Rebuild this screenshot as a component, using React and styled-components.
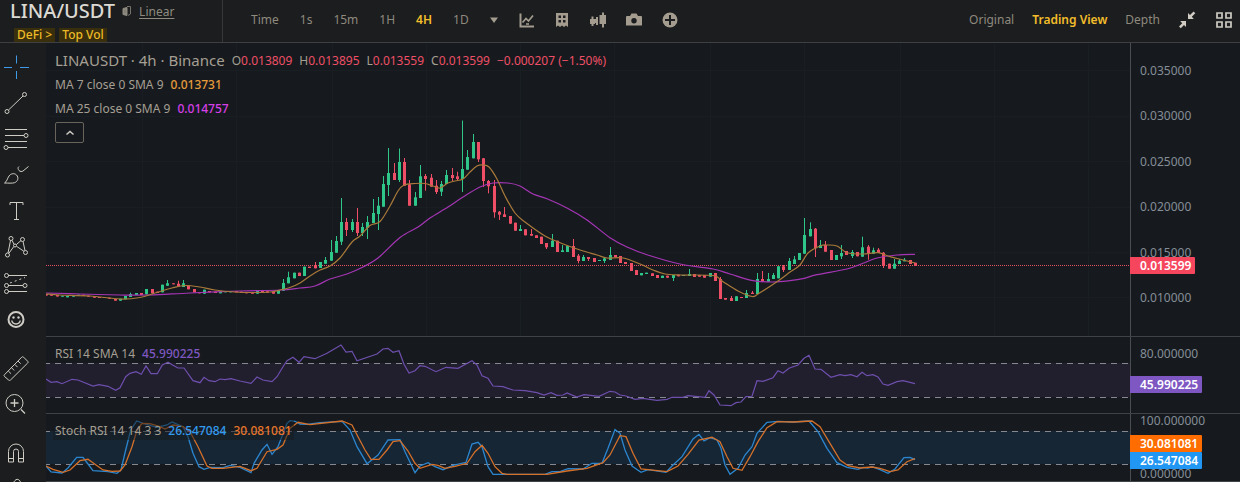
import React, { useState } from "react";
import styled, { createGlobalStyle } from "styled-components";

const INTERVALS = ["Time", "1s", "15m", "1H", "4H", "1D"];
const VIEWS = ["Original", "Trading View", "Depth"];
const PRICES = ["0.035000", "0.030000", "0.025000", "0.020000", "0.015000", "0.010000"];

const GREEN = "#2fc68a";
const RED = "#ee4f66";

// Canvas origin of each pane, all series below share one coordinate space
const LEFT = 46;
const MAIN_TOP = 43;
const RSI_TOP = 337;
const STOCH_TOP = 414;
const STEP = 5.265;

// [up, top, bottom, high, low]
const CANDLES = [
  [0, 294, 295.5], [0, 294.3, 295.7], [0, 295, 296.5], [1, 295.7, 296.7], [1, 296, 297.3],
  [1, 295.3, 296.7], [1, 294.7, 295.7], [0, 294.7, 295.7], [0, 295.7, 296.7], [0, 296.3, 297.7],
  [0, 297, 298], [0, 297, 298], [0, 297.7, 298.7], [0, 299, 300.7], [1, 298.7, 300.7],
  [1, 296, 299.3], [1, 294, 297, 292.7], [1, 293, 295], [0, 293, 295], [1, 289, 294.3],
  [0, 289, 293.3], [0, 291.7, 293], [1, 284.7, 292.3], [1, 283.3, 285.7, 280], [0, 283.3, 284.3],
  [0, 283.7, 286.7, 280.7], [1, 283.3, 287, 280], [0, 285.3, 289.3], [0, 289, 292.3], [0, 292, 293.3],
  [1, 289.7, 293.7], [0, 291, 292.3], [0, 291.7, 293], [1, 291.3, 293.3], [1, 291, 292.3],
  [1, 291, 292.3], [0, 291, 292.3], [0, 291.7, 293], [0, 292, 293.3], [0, 292.3, 293.7],
  [1, 290, 293.7], [0, 290, 292], [0, 291.3, 292.7], [0, 291.7, 293.7], [1, 290, 293.7],
  [1, 283, 290.7, 279], [1, 277.3, 283.3, 271.7], [1, 272.7, 278.3], [0, 272.7, 276], [1, 266.7, 276],
  [0, 266.7, 268], [0, 266, 268.3, 262], [1, 262, 268], [1, 260, 263.7, 257], [1, 252, 260.7, 240],
  [1, 241, 252.7, 236], [1, 222, 241.7, 198, 245], [0, 222, 230, 218, 236], [1, 222, 230, 219, 232], [0, 222, 233, 208, 236],
  [1, 227, 233, 223, 236], [1, 222, 228, 216, 239], [1, 213, 223, 199], [1, 205.7, 214, 197, 230], [1, 184, 206.7, 176],
  [1, 173, 185, 148, 196], [0, 173, 180, 163], [1, 162, 180, 148.5, 182], [0, 162, 185.7, 158], [0, 184.3, 205.7, 180],
  [1, 197.3, 205.7, 192], [1, 176.3, 198, 165], [0, 176, 179, 174, 190.7], [0, 177.7, 186.7, 174], [0, 185.7, 192, 180, 194],
  [1, 184, 191.7, 181, 196], [1, 175, 184, 170], [0, 175, 178, 168, 181], [0, 176.3, 179, 171.7, 180], [1, 169, 179, 120.5, 192],
  [1, 157, 169.7, 150], [1, 142, 158.3, 134], [0, 142, 159.3, 142, 162], [0, 158.3, 181, 158, 187], [0, 181, 186.3, 180, 193.3],
  [0, 186, 212.3, 180, 217.7], [0, 211.7, 214.7, 211, 220], [0, 214.3, 217, 207], [0, 216, 223.7], [0, 222.7, 230.7],
  [1, 229, 231, 225], [0, 229.3, 235.3], [0, 234, 235.7, 229], [0, 235.3, 238], [0, 236.7, 244],
  [0, 243, 247.3, 243, 249], [1, 240.7, 247, 234], [0, 240.7, 252], [1, 250.3, 252, 245], [1, 246, 252],
  [0, 246, 257, 239], [0, 255.7, 261, 254, 263.3], [1, 257, 261, 255], [0, 257, 259, 257, 261], [0, 258, 262],
  [1, 260, 261], [1, 258.3, 261, 257, 263], [1, 255, 260, 247], [0, 255, 257.3], [0, 256, 263],
  [0, 262, 264], [0, 263, 271], [0, 270, 275], [1, 273, 275.3], [1, 272.7, 274],
  [0, 273.3, 276], [0, 275, 278], [1, 275.7, 278], [0, 275.7, 277.7], [1, 275, 278, 275, 281],
  [0, 274.7, 276.3], [1, 275, 276], [1, 274, 276, 269], [0, 274, 277], [0, 275, 276.7],
  [0, 275, 277.7], [1, 273, 276.7], [0, 273, 281], [0, 279, 299, 277], [0, 298, 299.7],
  [0, 298, 301, 296], [1, 296.3, 301], [0, 297, 298], [1, 293, 298, 290], [0, 292.7, 294, 291],
  [1, 279, 294, 273], [0, 279, 281.7, 271], [1, 279, 281.7, 273], [1, 275, 279, 273], [1, 266.3, 278.3],
  [0, 266.3, 270, 265, 272], [1, 261, 270, 258], [1, 259.3, 264, 256], [1, 253, 260], [1, 235, 253.7, 218],
  [1, 229, 236.3, 222.3], [0, 228.7, 248.3, 228, 257], [1, 245, 248, 240], [0, 245, 251.7, 241], [0, 250, 260],
  [1, 255, 260], [1, 253, 256.3, 245, 259], [0, 251, 255], [1, 252, 256, 250, 258], [0, 252, 256.3],
  [1, 247.3, 256.7, 236.7], [0, 246.7, 253.7, 245, 259.7], [1, 250.3, 253.7, 247.7], [0, 249.7, 253, 248], [0, 252.7, 265, 252, 268],
  [0, 263.7, 268.7], [1, 263.7, 268.7, 259], [1, 260.7, 264, 259], [1, 259.7, 261.3, 258], [0, 260, 264],
  [0, 262.7, 265.7],
];

const MA7 =
  "46,294 60,295 90,296 120,299 140,297.5 155,293 172,288 185,285.5 200,287 215,290 235,292 255,292.5 270,292 280,290 290,287.5 300,283 310,276 320,270 330,266 340,258 352,242 360,236 370,225.5 380,221.5 390,206 398,191 404,185 415,183.5 425,183.5 433,186 440,188 448,183 455,181 463,179 470,172 477,166 483,165 489,167 497,179 505,196 515,213 525,222 545,236 560,242.7 580,250 597,255 607,258 623,258 640,264 653,270 665,274 680,275 713,275.5 722,281 738,291 752,296.5 758,294 778,281 790,272 800,265 808,253 820,246 827,245 837,246 847,252.7 863,254 878,252.7 890,256.7 903,260 915,263";

const MA25 =
  "46,293 80,294 120,295 150,295 190,293 240,291 280,290 300,288 315,286 330,279 347,274 363,267 378,258 400,237.5 418,227 430,218 448,207 463,197 480,187 493,183 508,183 520,186 533,194 547,198.7 567,208 587,220 610,237.7 627,247 647,254.7 680,264 713,269 730,274 753,280.7 773,282 790,280.7 803,278.7 817,274.7 847,269 863,263.3 877,258 897,255 915,254.3";

const RSI =
  "46,379 51,382.3 57,381.7 62,383.7 72,379.3 78,380 93,386 99,384.7 108,386.3 115.7,390.3 120,387.7 125.7,376.7 130,373.3 136,371.7 141.3,374.3 146,366 151,373.7 157.3,373.7 162.3,365 168,362.3 173,365.3 178,368 184,368 193,380.7 200,382.7 204,377.3 209,380.7 215,381.7 220,379 225,379.7 231,378.7 240,381 251,383.3 257,377 263,380 272,381.7 277,376.7 283,366.7 287,360.7 293,357.3 299,362.3 304,356.7 315,358.7 327,353.3 341,345 346,352 352,351.3 357,360.7 377,354 383,349 388,348.3 393,352.3 399,350.7 404,364.3 409,373 415,370.7 420,365.7 425,366.3 436,371.7 446,367.3 458,368.3 472,360.7 477,365 482,375.7 488,378.3 493,386 503,386.7 513,390 525,390.7 537,392.7 544,395 551,392.7 557,395.3 563,395 567,393 577,397 584,394.7 599,396.3 610,391.3 615,392 620,395 626,396 635,399.3 643,398.3 657,400.3 667,399.3 672,397.3 683,397.3 688,395.7 705,397.3 709,390.7 714,395 720,405 731,405.7 736,402.7 741,402 746,396.7 752,396.3 757,380.7 763,381.3 773,377.7 778,370.7 783,373 789,368.3 798,365 804,358.3 809,355.3 815,369 821,369.3 831,377.3 840,374.7 845,375.7 851,374.7 857,376.7 862,372.3 867,375.7 873,374.7 878,377 883,384 888,385.3 897,381.7 903,380.7 915,383.7";

const STOCH_K =
  "46,466 51,472 62,473 68,468 76.7,457.3 83,457.3 88,464 93,470.7 108,471.7 117,473.3 121,470 125.7,450 130.7,430 136.7,421 143,423.3 157,427.3 167,425 172,422 183,426.7 188,436.7 193,453.3 199,466.7 204,469.3 210,467.3 223,467.7 230,465.3 240,467.3 251,472.7 254,463.3 262,450 267,444.3 272,454.3 278,446.7 287,423.3 290,420.7 295,421.3 300,424 307,424.3 320,422.7 342,421.3 350,430 357,446.7 367,463.7 378,455 388,440 400,439.7 405,451.7 415,472.7 420,466 428,462.7 435,466.7 443,469.7 453,465.3 466,462.3 472,444 478,442.3 482,446.7 488,466.7 493,474.3 545,474.3 552,471.7 560,471.7 568,468.7 583,469 592,463.3 602,463.3 608,448.3 615,429.5 620,433.3 625,450 632,466 641,472.3 648,469.7 666,472.3 672,466 682,456.7 693,439 699,434.3 704,441 710,437.7 717,440 721,448.3 725,465 730,474.3 738,468.3 745,455 752,446.7 757,433.3 767,422.3 778,421.3 793,422 809,421 818,431.7 827,448.3 837,462.7 847,467.3 858,469.3 863,467.3 868,468 872,466.7 880,469.7 888,473.3 895,469 904,457.7 910,457.3 915,459.7";

const STOCH_D =
  "46,466 53,469.3 63,472.3 70,470 80,460.7 88,459.3 95,464.3 103,470 112,471.3 120,471 125,465 132,446.7 137,430 142,423.3 150,423.7 160,426.7 165,429 173,425 183,426.7 190,431.7 198,446.7 207,466 212,468.3 223,468.3 240,466.3 251,470.7 257,468.3 267,451.7 277,449.3 283,445 290,428.3 298,422.3 310,424.7 342,421 352,425 358,436.7 365,450 371,459.3 379,459.3 387,450 393,441.7 400,440.7 408,451 415,463.3 420,468.3 432,464.3 438,465.3 445,468.3 455,466.3 467,463.3 475,451.7 482,445.3 488,453.3 495,466.7 502,473.3 507,474.3 547,474.3 567,471 587,468.3 603,462.7 610,455 620,435.7 626,436.7 633,453.3 641,469 667,471.7 678,466 688,454.3 699,440 712,437.3 720,441.7 727,456.7 733,468.3 742,470.3 750,456.7 758,441.7 767,427.7 777,421.7 793,422 812,421 820,426.7 830,443.3 840,460 848,465.7 860,468 872,467 880,468.3 890,471.7 898,470 907,461.7 915,458.7";

// Catmull-Rom to bezier
const smooth = (points) => {
  const p = points.split(" ").map((s) => s.split(",").map(Number));
  let d = `M${p[0]}`;
  for (let i = 0; i < p.length - 1; i++) {
    const a = p[i - 1] || p[i];
    const b = p[i];
    const c = p[i + 1];
    const e = p[i + 2] || c;
    d += `C${b[0] + (c[0] - a[0]) / 6},${b[1] + (c[1] - a[1]) / 6} ${c[0] - (e[0] - b[0]) / 6},${c[1] - (e[1] - b[1]) / 6} ${c}`;
  }
  return d;
};

const GlobalStyle = createGlobalStyle`
  * { box-sizing: border-box; }
  body {
    margin: 0;
    background: #161a1e;
    color: #a59f93;
    font-family: "Noto Sans", "Open Sans", sans-serif;
    font-size: 12px;
  }
  button { font: inherit; color: inherit; }
`;

const Shell = styled.div`
  height: 100vh;
  display: flex;
  flex-direction: column;
  overflow: hidden;
`;

const Header = styled.header`
  flex: none;
  display: flex;
  height: 43px;
  background: #1b1d1e;
  border-bottom: 1px solid #3d3f40;
`;

const Pair = styled.div`
  width: 223px;
  padding-left: 10px;
  border-right: 1px solid #35383a;
`;

const PairRow = styled.div`
  display: flex;
  align-items: center;
  height: 22px;
  gap: 7px;
`;

const Symbol = styled.h1`
  margin: 0;
  font-size: 20px;
  line-height: 22px;
  font-weight: 500;
  color: #dcd9d3;
`;

const PairLink = styled.a`
  color: #8f8a80;
  text-underline-offset: 2px;
`;

const Tags = styled.div`
  display: flex;
  gap: 4px;
  padding: 6px 4px 0;
`;

const Tag = styled.a`
  padding: 0 3px;
  line-height: 14px;
  color: #edbb27;
  background: #3a2f0c;
  font-weight: 500;
  text-decoration: none;
`;

const Toolbar = styled.nav`
  flex: 1;
  display: flex;
  align-items: center;
  padding: 0 8px 2px 28px;
`;

const Group = styled.div`
  display: flex;
  align-items: center;
  gap: ${(props) => props.$gap}px;
  margin-left: ${(props) => (props.$end ? "auto" : 0)};
`;

const Tab = styled.button`
  padding: 0;
  border: 0;
  background: none;
  cursor: pointer;
  line-height: 18px;
  color: ${(props) => (props.$active ? "#f3bd2b" : "#8f897e")};
  font-weight: ${(props) => (props.$active ? 600 : 400)};
`;

const IconButton = styled.button`
  display: flex;
  padding: 0;
  border: 0;
  background: none;
  cursor: pointer;
  color: ${(props) => (props.$bright ? "#d0ccc4" : "#a39c8f")};
`;

const Body = styled.div`
  flex: 1;
  min-height: 0;
  display: flex;
`;

const Sidebar = styled.aside`
  flex: none;
  width: 46px;
  padding: 6px 0 0 2px;
  display: flex;
  flex-direction: column;
  gap: 13px;
  background: #1b1d1e;
  overflow: hidden;
`;

const Tool = styled.button`
  display: flex;
  align-items: center;
  justify-content: center;
  width: 28px;
  height: 36px;
  padding: 0;
  border: 0;
  background: none;
  cursor: pointer;
  color: ${(props) => (props.$active ? "#3f9be8" : "#cfccc5")};
`;

const Charts = styled.main`
  flex: 1;
  min-width: 0;
`;

const Pane = styled.section`
  position: relative;
  display: flex;
  height: ${(props) => props.$height}px;
  border-bottom: 1px solid #3f4346;
`;

const Plot = styled.svg`
  flex: 1;
  min-width: 0;
  height: 100%;
  display: block;
`;

const Axis = styled.div`
  position: relative;
  flex: none;
  width: 110px;
  padding: ${(props) => props.$pad};
  border-left: 1px solid #4a4d50;
  display: flex;
  flex-direction: column;
  justify-content: space-between;
  color: #858d97;
  line-height: 14px;
`;

// Value flags laid over the scale
const Flags = styled.div`
  position: absolute;
  left: -1px;
  top: ${(props) => props.$top}px;
`;

const Flag = styled.div`
  padding: 0 4px 0 10px;
  line-height: 17px;
  border-radius: 0 1px 1px 0;
  font-weight: 600;
  color: #fff;
  background: ${(props) => props.$color};
`;

const Legend = styled.div`
  position: absolute;
  left: 7px;
  top: ${(props) => props.$top}px;
`;

const LegendRow = styled.div`
  width: max-content;
  display: flex;
  align-items: center;
  gap: 7px;
  height: ${(props) => props.$height || 24}px;
  padding: 0 2px;
  background: ${(props) => (props.$shade ? "rgba(22, 26, 30, 0.5)" : "none")};
`;

const Market = styled.span`
  font-size: 15px;
`;

const Value = styled.span`
  color: ${(props) => props.$color};
  font-weight: ${(props) => (props.$strong ? 500 : 400)};
`;

const Collapse = styled.button`
  display: flex;
  align-items: center;
  justify-content: center;
  width: 29px;
  height: 21px;
  margin: 2px;
  padding: 0;
  background: none;
  border: 1px solid #69645b;
  border-radius: 2px;
  cursor: pointer;
`;

const Glyph = ({ size = 28, children }) => (
  <svg width={size} height={size} viewBox={`0 0 ${size} ${size}`} fill="none" stroke="currentColor" aria-hidden="true">
    {children}
  </svg>
);

const DRAWING_TOOLS = [
  [
    ["Cross", <path d="M14.5 2.5v8M14.5 18v8M2 14.5h8M18 14.5h9" />],
    ["Trend line", <><circle cx="5" cy="22.500" r="2" /><circle cx="22.500" cy="5.500" r="2" /><path d="M6.500 21 21 7" /></>],
    ["Fib retracement", <><path d="M3 4.500h22M3 10.500h19M3 16.500h22M6 22.500h19" /><circle cx="24" cy="10.500" r="2" /><circle cx="4" cy="22.500" r="2" /></>],
    ["Brush", <path d="M2.500 22c2.500-1.500 2.500-4 4.500-7 2-2.800 5.500-3 7.500-1 2.500 2.500 1.500 6.500-2 7.700-2.500.8-6 .3-10 .3zM17 5.500c-1.500 1-1 2.800 0 4 1.200 1.200 3 1.300 4 .5L26.500 5.500" />],
    ["Text", <path d="M8 8V5.500h13V8M14.500 5.500v17M12 22.500h5" />],
    ["Pattern", <><circle cx="9" cy="5.500" r="2" /><circle cx="20.500" cy="6.500" r="2" /><circle cx="5.500" cy="22" r="2" /><circle cx="23.500" cy="19.500" r="2" /><circle cx="13" cy="12.500" r="1.500" /><path d="M8.500 7.500 6 20M10 7.300l2 4M14.300 11.600l4.700-4M11.800 13.500l-4.900 6.800M14.500 13.300l7.300 4.900M21 8.500l2 9" /></>],
    ["Forecast", <><path d="M6 6.500h19M6 16.500h15M6 22.500h19" /><circle cx="4.500" cy="6.500" r="2" /><circle cx="4.500" cy="16.500" r="2" /><circle cx="23" cy="16.500" r="2" /><circle cx="4.500" cy="22.500" r="2" /><path d="M8 14 23 8.500" strokeDasharray="2 3" /></>],
    ["Icons", <><circle cx="14" cy="14.500" r="7.500" strokeWidth="2" /><circle cx="11.500" cy="12.500" r="1.200" fill="currentColor" stroke="none" /><circle cx="16.500" cy="12.500" r="1.200" fill="currentColor" stroke="none" /><path d="M9.800 15.500c.7 4.500 7.700 4.500 8.400 0" strokeWidth="1.500" /></>],
  ],
  [
    ["Measure", <path d="M2.500 20.700 19.700 3.200c.6-.6 1.300-.6 1.900 0l4 4c.6.600.6 1.300 0 1.900L8.500 26c-.6.600-1.300.6-1.900 0l-4.100-3.500c-.6-.6-.6-1.200 0-1.800zM6.300 17l2.700 2.700M9.500 13.700l2.700 2.700M12.800 10.400l2.700 2.700M16 7l2.700 2.700" />],
    ["Zoom in", <><circle cx="12.500" cy="13" r="8.500" /><path d="M19 19.500l4 4M12.500 9v8M8.500 13h8" strokeWidth="1.300" /></>],
  ],
  [
    ["Magnet", <path d="M6.500 23V12.500a7.500 7.500 0 0 1 15 0V23h-5V12.500a2.500 2.500 0 0 0-5 0V23zM6.500 19.500h5M16.500 19.500h5" />],
    ["Drawing mode", <path d="M3 18 13 5.500c1.200-1.500 3-1.500 4.200-.4 1.500 1.300 1.600 2.900.4 4.400L8 22H3zM11 8l4.500 4M9 10.500l4.500 4" />],
  ],
];

const CHART_TOOLS = [
  ["Indicators", <><path d="M2.500 1.500V14.500H16" strokeWidth="2" /><path d="M4.500 10.500l3.500-4 2.500 2.500 4.500-5.500M8 12h3" strokeWidth="1.700" /></>],
  ["Order history", <path d="M2 1h12v14l-2-1.500-2 1.500-2-1.500L6 15l-2-1.500L2 15zM4.500 3.500v2.500H7V3.500zm4.500 0v2.500h2.500V3.500zM4.500 8v2.500H7V8zM9 8v2.500h2.500V8z" fill="currentColor" fillRule="evenodd" stroke="none" />],
  ["Candle style", <path d="M0 7h1.500V4.500h2V7H5v5H3.500v2h-2v-2H0zM5 9.500V7h1V5h2v8H6V11H5zM9.500 3H12V.5h2V3h2.500v9H14v3.500h-2V12H9.500z" fill="currentColor" stroke="none" />],
  ["Snapshot", <path d="M1 4h3l1.500-2.500h5L12 4h3a1 1 0 0 1 1 1v8.500H0V5a1 1 0 0 1 1-1zm7 2a2.700 2.700 0 1 0 0 5.400A2.700 2.700 0 0 0 8 6z" fill="currentColor" fillRule="evenodd" stroke="none" />],
  ["Add", <><circle cx="8" cy="8" r="7.500" fill="currentColor" stroke="none" /><path d="M8 3v10M3 8h10" stroke="#1b1d1e" strokeWidth="2" /></>],
];

const Grid = () => (
  <g stroke="#191e22">
    {[96, 190, 286, 380, 474, 568, 664, 758, 854, 948, 1042].map((x) => (
      <path key={x} d={`M${x}.5 0v400`} />
    ))}
  </g>
);

const Band = ({ top, bottom, fill }) => (
  <>
    <rect x="0" y={top} width="100%" height={bottom - top} fill={fill} />
    {[top, bottom].map((y) => (
      <line key={y} x1="0" x2="100%" y1={y + 0.5} y2={y + 0.5} stroke="#858890" strokeDasharray="6 5" strokeDashoffset="2" />
    ))}
  </>
);

const Candles = () =>
  CANDLES.map(([up, top, bottom, high = top, low = bottom], i) => {
    const x = Math.round(46.2 + STEP * i);
    return (
      <g key={i} fill={up ? GREEN : RED}>
        <rect x={x} y={high} width="1" height={low - high} />
        <rect x={x - 1} y={top} width="3" height={bottom - top} />
      </g>
    );
  });

const App = () => {
  const [interval, setActiveInterval] = useState("4H");
  const [view, setView] = useState("Trading View");
  const [open, setOpen] = useState(true);

  return (
    <Shell>
      <GlobalStyle />
      <Header>
        <Pair>
          <PairRow>
            <Symbol>LINA/USDT</Symbol>
            <Glyph size={10}>
              <path d="M1 2.500l4-1v8l-4-1z" fill="#8f8a80" stroke="#8f8a80" />
              <path d="M5 .5h3.500v7.500L6 9.500M3 4v3" stroke="#77736b" />
            </Glyph>
            <PairLink href="#linear">Linear</PairLink>
          </PairRow>
          <Tags>
            <Tag href="#defi">DeFi &gt;</Tag>
            <Tag href="#top-vol">Top Vol</Tag>
          </Tags>
        </Pair>
        <Toolbar>
          <Group $gap={21}>
            {INTERVALS.map((name) => (
              <Tab key={name} $active={name === interval} onClick={() => setActiveInterval(name)}>
                {name}
              </Tab>
            ))}
            <Group $gap={20}>
              <IconButton aria-label="More intervals">
                <Glyph size={8}>
                  <path d="M0 1.500h8L4 7z" fill="currentColor" stroke="none" />
                </Glyph>
              </IconButton>
              {CHART_TOOLS.map(([label, icon]) => (
                <IconButton key={label} aria-label={label}>
                  <Glyph size={16}>{icon}</Glyph>
                </IconButton>
              ))}
            </Group>
          </Group>
          <Group $gap={18} $end>
            {VIEWS.map((name) => (
              <Tab key={name} $active={name === view} onClick={() => setView(name)}>
                {name}
              </Tab>
            ))}
            <Group $gap={20}>
              <IconButton $bright aria-label="Exit full screen">
                <Glyph size={18}>
                  <path d="M10 2l2 2 3.500-3.500 1.800 1.800L13.800 5.800l2 2.200H10zM8 16l-2-2-3.200 3.200L1 15.500 4.200 12.200l-2-2.200H8z" fill="currentColor" stroke="none" />
                </Glyph>
              </IconButton>
              <IconButton $bright aria-label="Layout">
                <Glyph size={16}>
                  <path d="M1 1h5v5H1zM10 1h5v5h-5zM1 10h5v5H1zM10 10h5v5h-5z" strokeWidth="1.700" />
                </Glyph>
              </IconButton>
            </Group>
          </Group>
        </Toolbar>
      </Header>

      <Body>
        <Sidebar>
          {DRAWING_TOOLS.map((tools, i) => (
            <div key={i}>
              {tools.map(([label, icon]) => (
                <Tool key={label} aria-label={label} $active={label === "Cross"}>
                  <Glyph>{icon}</Glyph>
                </Tool>
              ))}
            </div>
          ))}
        </Sidebar>

        <Charts>
          <Pane $height={294}>
            <Plot>
              <Grid />
              <g stroke="#191e22">
                {[27, 73, 118, 164, 209, 254].map((y) => (
                  <line key={y} x1="0" x2="100%" y1={y + 0.5} y2={y + 0.5} />
                ))}
              </g>
              <line x1="0" x2="100%" y1="222.500" y2="222.500" stroke="#e8505f" strokeDasharray="1 1" />
              <g transform={`translate(${-LEFT} ${-MAIN_TOP})`} fill="none">
                <Candles />
                <path d={smooth(MA25)} stroke="#a535b5" strokeWidth="1.200" />
                <path d={smooth(MA7)} stroke="#a8793a" strokeWidth="1.200" />
              </g>
            </Plot>
            <Legend $top={5}>
              <LegendRow>
                <Market>LINAUSDT · 4h · Binance</Market>
                <span>O<Value $color={RED}>0.013809</Value></span>
                <span>H<Value $color={RED}>0.013895</Value></span>
                <span>L<Value $color={RED}>0.013559</Value></span>
                <span>C<Value $color={RED}>0.013599</Value></span>
                <Value $color={RED}>−0.000207 (−1.50%)</Value>
              </LegendRow>
              {open && (
                <>
                  <LegendRow>
                    MA 7 close 0 SMA 9 <Value $strong $color="#e79c3c">0.013731</Value>
                  </LegendRow>
                  <LegendRow>
                    MA 25 close 0 SMA 9 <Value $strong $color="#d63fe6">0.014757</Value>
                  </LegendRow>
                </>
              )}
              <Collapse aria-label="Toggle indicators" onClick={() => setOpen(!open)}>
                <Glyph size={10}>
                  <path d="M1.500 6.500 5 3.500l3.500 3" stroke="#cfccc5" strokeWidth="1.500" />
                </Glyph>
              </Collapse>
            </Legend>
            <Axis $pad="21px 0 31px 9px">
              {PRICES.map((price) => (
                <span key={price}>{price}</span>
              ))}
              <Flags $top={214}>
                <Flag $color="#f6465d">0.013599</Flag>
              </Flags>
            </Axis>
          </Pane>

          <Pane $height={77}>
            <Plot>
              <Band top={26} bottom={60} fill="#211e2d" />
              <g transform={`translate(${-LEFT} ${-RSI_TOP})`} fill="none">
                <polyline points={RSI} stroke="#6e4fae" strokeWidth="1.200" />
              </g>
            </Plot>
            <Legend $top={6}>
              <LegendRow $height={20}>
                RSI 14 SMA 14 <Value $strong $color="#7e57c2">45.990225</Value>
              </LegendRow>
            </Legend>
            <Axis $pad="10px 0 0 9px">
              <span>80.000000</span>
              <Flags $top={39}>
                <Flag $color="#7e57c2">45.990225</Flag>
              </Flags>
            </Axis>
          </Pane>

          <Pane $height={68}>
            <Plot>
              <Band top={17} bottom={50} fill="#162635" />
              <g transform={`translate(${-LEFT} ${-STOCH_TOP})`} fill="none">
                <polyline points={STOCH_K} stroke="#2c86cf" strokeWidth="1.300" />
                <polyline points={STOCH_D} stroke="#d4702a" strokeWidth="1.300" />
              </g>
            </Plot>
            <Legend $top={6}>
              <LegendRow $height={20} $shade>
                Stoch RSI 14 14 3 3 <Value $strong $color="#339af0">26.547084</Value>
                <Value $strong $color="#e9762b">30.081081</Value>
              </LegendRow>
            </Legend>
            <Axis $pad="0 0 0 9px">
              <span>100.000000</span>
              <span>0.000000</span>
              <Flags $top={21}>
                <Flag $color="#ff6d00">30.081081</Flag>
                <Flag $color="#2196f3">26.547084</Flag>
              </Flags>
            </Axis>
          </Pane>
        </Charts>
      </Body>
    </Shell>
  );
};

export default App;
